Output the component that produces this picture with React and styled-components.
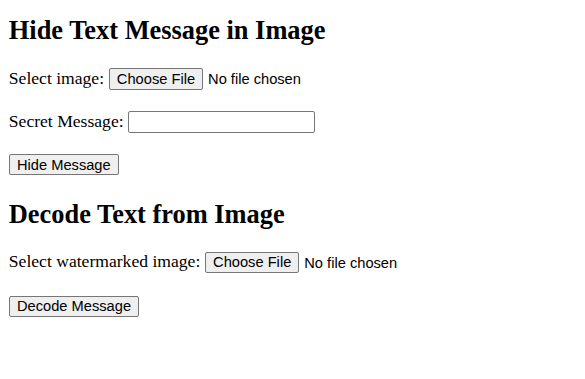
import React from "react";
import styled, { createGlobalStyle } from "styled-components";

const GlobalStyle = createGlobalStyle`
  body {
    margin: 0;
    font-family: "Liberation Serif", "Times New Roman", serif;
    font-size: 17.6px;
    color: #000;
    background: #fff;
  }
`;

const Page = styled.div`
  display: flow-root;
  padding: 0 8.8px;
`;

const Heading = styled.h2`
  font-size: 26.4px;
  font-weight: bold;
  margin: ${(p) => (p.$first ? "14.6px" : "22.8px")} 0 ${(p) => (p.$first ? "22.4px" : "21px")};
`;

const Row = styled.div`
  display: flex;
  align-items: baseline;
  gap: 4.6px;
  height: 22.5px;
  margin-bottom: ${(p) => (p.$tall ? "21.9px" : "20.5px")};
`;

const controlFont = `
  font-family: "Liberation Sans", Arial, sans-serif;
  font-size: 14.67px;
  color: #000;
`;

const FileInput = styled.input`
  ${controlFont}
  height: 21.3px;

  &::file-selector-button {
    ${controlFont}
    height: 21.3px;
    padding: 1px 7.2px;
    margin: 0 4.8px 0 0;
    background: #efefef;
    border: 1px solid #767676;
    border-radius: 2px;
  }
`;

const TextInput = styled.input`
  ${controlFont}
  box-sizing: border-box;
  width: 187px;
  height: 21.7px;
  padding: 1px 2px;
  border: 1px solid #767676;
  border-radius: 2px;
`;

const Button = styled.button`
  ${controlFont}
  height: 21.3px;
  padding: 1px 7.2px;
  background: #efefef;
  border: 1px solid #767676;
  border-radius: 2px;
`;

export default function App() {
  return (
    <Page>
      <GlobalStyle />
      <Heading $first>Hide Text Message in Image</Heading>
      <Row>
        <span>Select image:</span>
        <FileInput type="file" accept="image/*" />
      </Row>
      <Row>
        <span>Secret Message:</span>
        <TextInput type="text" />
      </Row>
      <Row>
        <Button>Hide Message</Button>
      </Row>

      <Heading>Decode Text from Image</Heading>
      <Row $tall>
        <span>Select watermarked image:</span>
        <FileInput type="file" accept="image/*" />
      </Row>
      <Row>
        <Button>Decode Message</Button>
      </Row>
    </Page>
  );
}
